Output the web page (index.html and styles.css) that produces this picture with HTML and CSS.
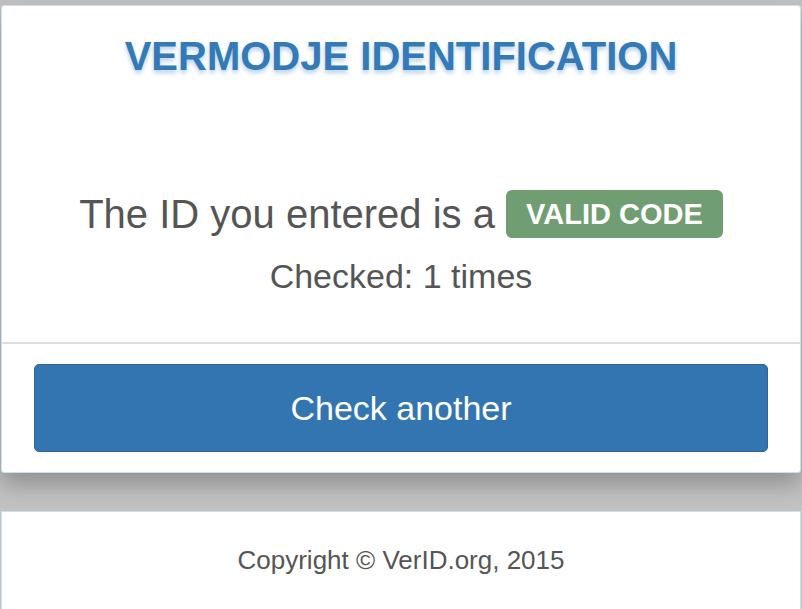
FILE: index.html
```html
<!DOCTYPE html>
<html lang="en">
<head>
  <meta charset="UTF-8" />
  <meta name="viewport" content="width=device-width, initial-scale=1.0"/>
  <title>Vermodje Identification</title>
  <link rel="stylesheet" href="styles.css">
</head>
<body>

  <div class="panel">
    <div class="panel-body">
      <h1 class="title">VERMODJE IDENTIFICATION</h1>
      <p class="result">The ID you entered is a <span class="badge">VALID CODE</span></p>
      <p class="count">Checked: 1 times</p>
    </div>
    <div class="panel-footer">
      <button class="btn" type="button">Check another</button>
    </div>
  </div>

  <div class="footer">
    Copyright &copy; VerID.org, 2015
  </div>

</body>
</html>
```

FILE: styles.css
```css
html, body {
  margin: 0;
  height: 100%;
}
body {
  background-color: #c2c2c2;
  font-family: "Liberation Sans", Arial, sans-serif;
  color: #555;
  padding: 5px 1px 0 1px;
  box-sizing: border-box;
  overflow: hidden;
}
.panel {
  background: #fff;
  border: 1px solid #c6e2ec;
  border-radius: 3px;
  box-shadow: 0 12px 22px rgba(0, 0, 0, 0.25);
}
.panel-body {
  padding: 28px 0 48px;
  text-align: center;
  border-bottom: 2px solid #dedede;
}
.title {
  margin: 0 0 112px;
  font-size: 40px;
  line-height: 44px;
  color: #337ab7;
  text-shadow: 0 3px 4px rgba(51, 122, 183, 0.35);
}
.result {
  margin: 0 0 20px;
  font-size: 40px;
  line-height: 48px;
}
.badge {
  display: inline-block;
  background: #709e72;
  color: #fff;
  font-weight: bold;
  font-size: 29px;
  line-height: 48px;
  padding: 0 20px;
  border-radius: 6px;
  vertical-align: top;
}
.count {
  margin: 0;
  font-size: 34px;
  line-height: 36px;
}
.panel-footer {
  padding: 20px 32px 20px;
}
.btn {
  display: block;
  width: 100%;
  height: 88px;
  background: #3375b0;
  border: 1px solid #2c659a;
  border-radius: 5px;
  color: #fff;
  font-family: inherit;
  font-size: 34px;
}
.footer {
  margin-top: 38px;
  height: 100px;
  background: #fff;
  border: 1px solid #c6e2ec;
  text-align: center;
  font-size: 26px;
  line-height: 96px;
}
```
